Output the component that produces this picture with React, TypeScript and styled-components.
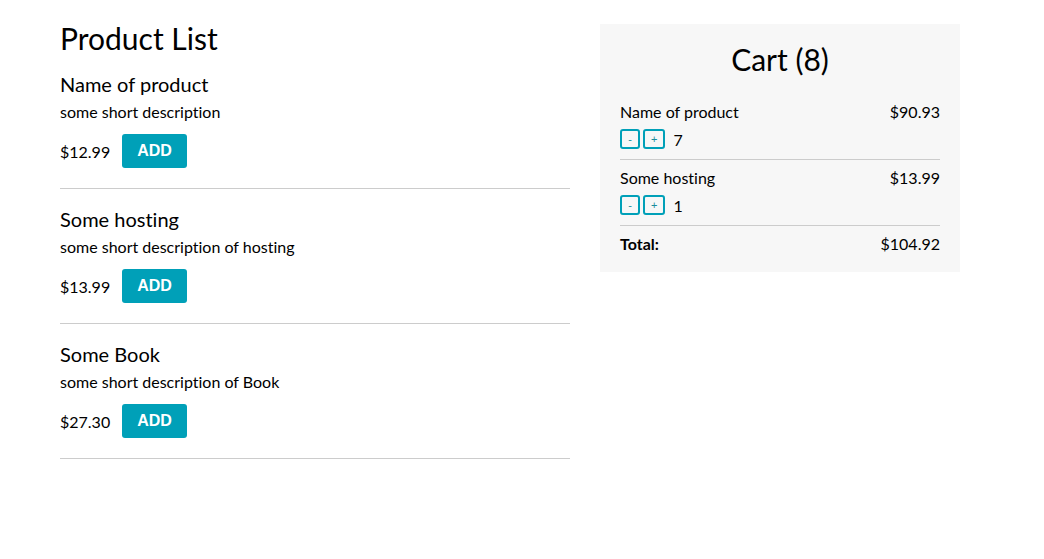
import React from "react";
import styled, { createGlobalStyle } from "styled-components";

const GlobalStyle = createGlobalStyle`
  html, body { margin: 0; padding: 0; background: #fff; }
  body {
    font-family: "Lato", "Liberation Sans", sans-serif;
    font-size: 16px;
    color: #000;
    font-variant-ligatures: none;
  }
`;

const Page = styled.div`
  display: flex;
  align-items: flex-start;
  gap: 30px;
  padding: 22px 60px;
`;

const ListColumn = styled.section`
  width: 510px;
  flex: none;
`;

const ListTitle = styled.h1`
  margin: 0;
  font-size: 30px;
  font-weight: 400;
  line-height: 32px;
`;

const ProductItem = styled.div`
  padding: 18px 0 20px;
  border-bottom: 1px solid #ccc;
`;

const ProductName = styled.h3`
  margin: 0 0 6px;
  font-size: 20px;
  font-weight: 400;
  line-height: 24px;
`;

const ProductDesc = styled.p`
  margin: 0 0 13px;
  font-size: 16px;
  line-height: 19px;
`;

const PriceRow = styled.div`
  display: flex;
  align-items: center;
  gap: 12px;
  font-size: 16px;
`;

const AddButton = styled.button`
  font-family: "Liberation Sans", Arial, sans-serif;
  font-weight: 700;
  font-size: 16px;
  line-height: 18px;
  padding: 8px 15px;
  border: none;
  border-radius: 3px;
  background: #00a0b8;
  color: #fff;
  cursor: pointer;
`;

const Cart = styled.aside`
  width: 360px;
  box-sizing: border-box;
  flex: none;
  margin-top: 2px;
  padding: 20px 20px 19px;
  background: #f7f7f7;
`;

const CartTitle = styled.h2`
  margin: 0 0 20px;
  text-align: center;
  font-size: 30px;
  font-weight: 400;
  line-height: 30px;
`;

const CartItem = styled.div`
  padding: 9px 0 10px;
  border-bottom: 1px solid #ccc;
`;

const CartLine = styled.div`
  display: flex;
  justify-content: space-between;
  font-size: 16px;
  line-height: 18px;
`;

const TotalRow = styled(CartLine)`
  padding-top: 9px;
`;

const TotalLabel = styled.span`
  font-weight: 700;
`;

const QtyRow = styled.div`
  display: flex;
  align-items: center;
  gap: 3px;
  height: 20px;
  margin-top: 8px;
  font-size: 16px;
`;

const QtyButton = styled.button`
  box-sizing: border-box;
  height: 20px;
  min-width: 20px;
  padding: 0 6px;
  border: 2px solid #00a0b8;
  border-radius: 3px;
  background: transparent;
  color: #1a8c9c;
  font-family: "Liberation Sans", Arial, sans-serif;
  font-size: 11px;
  line-height: 16px;
  cursor: pointer;
`;

const Qty = styled.span`
  margin-left: 5px;
`;

type Product = { name: string; desc: string; price: number };

const products: Product[] = [
  { name: "Name of product", desc: "some short description", price: 12.99 },
  { name: "Some hosting", desc: "some short description of hosting", price: 13.99 },
  { name: "Some Book", desc: "some short description of Book", price: 27.3 },
];

const cartItems = [
  { name: "Name of product", total: 90.93, qty: 7 },
  { name: "Some hosting", total: 13.99, qty: 1 },
];

export default function App() {
  const count = cartItems.reduce((s, i) => s + i.qty, 0);
  const total = cartItems.reduce((s, i) => s + i.total, 0);
  return (
    <>
      <GlobalStyle />
      <Page>
        <ListColumn>
          <ListTitle>Product List</ListTitle>
          {products.map((p) => (
            <ProductItem key={p.name}>
              <ProductName>{p.name}</ProductName>
              <ProductDesc>{p.desc}</ProductDesc>
              <PriceRow>
                <span>${p.price.toFixed(2)}</span>
                <AddButton>ADD</AddButton>
              </PriceRow>
            </ProductItem>
          ))}
        </ListColumn>
        <Cart>
          <CartTitle>Cart ({count})</CartTitle>
          {cartItems.map((c) => (
            <CartItem key={c.name}>
              <CartLine>
                <span>{c.name}</span>
                <span>${c.total.toFixed(2)}</span>
              </CartLine>
              <QtyRow>
                <QtyButton>-</QtyButton>
                <QtyButton>+</QtyButton>
                <Qty>{c.qty}</Qty>
              </QtyRow>
            </CartItem>
          ))}
          <TotalRow>
            <TotalLabel>Total:</TotalLabel>
            <span>${total.toFixed(2)}</span>
          </TotalRow>
        </Cart>
      </Page>
    </>
  );
}
